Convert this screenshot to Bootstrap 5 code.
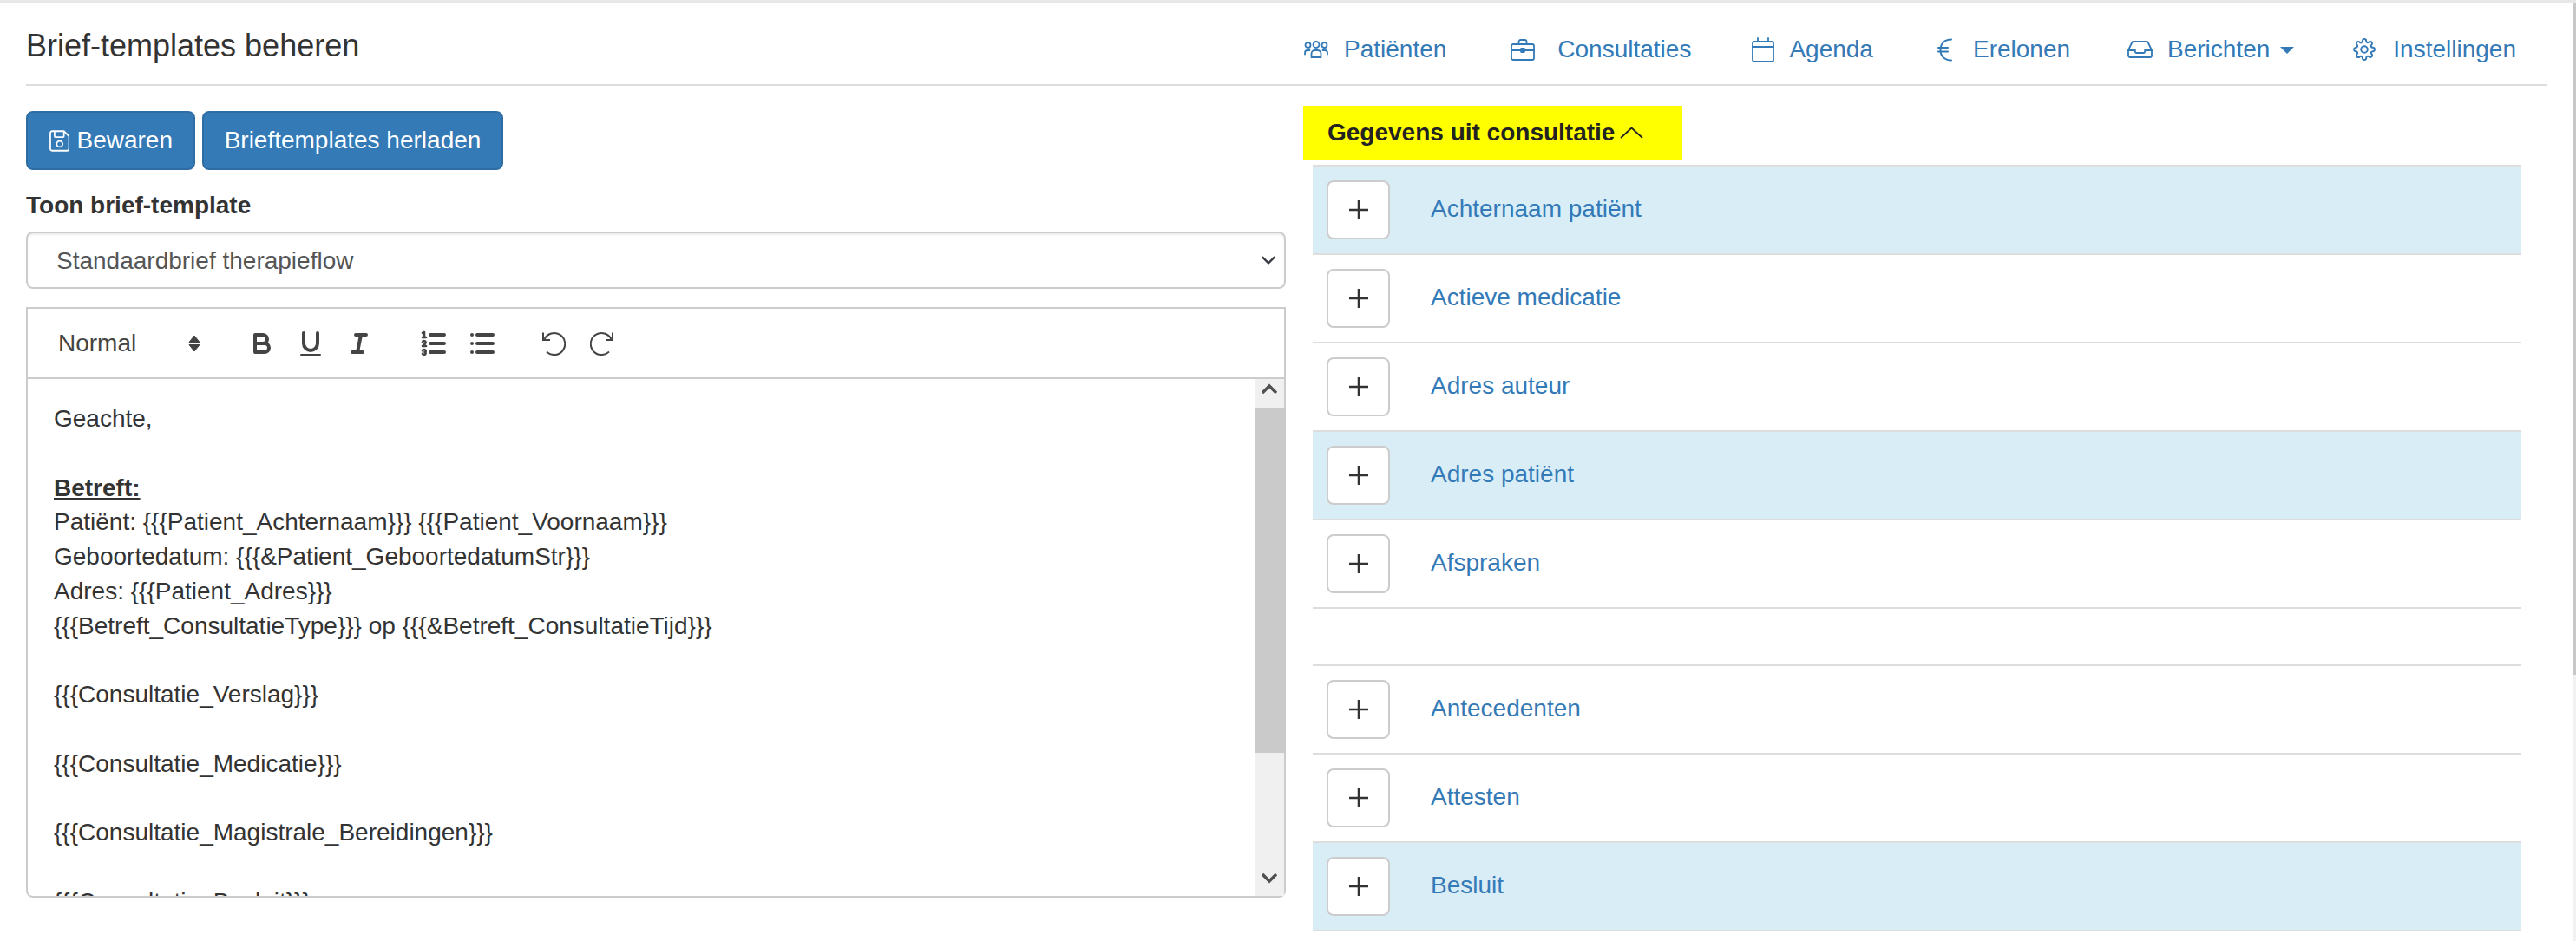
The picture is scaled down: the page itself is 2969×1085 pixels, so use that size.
<!DOCTYPE html>
<html lang="nl">
<head>
<meta charset="utf-8">
<title>Brief-templates beheren</title>
<link href="https://cdn.jsdelivr.net/npm/bootstrap@5.3.0/dist/css/bootstrap.min.css" rel="stylesheet">
<style>
html,body{height:1085px;overflow:hidden;margin:0}
body{font-family:"Liberation Sans",Arial,sans-serif;font-size:28px;line-height:40px;color:#333;background:#fff}
.pagewrap{height:1085px;border-top:3px solid #e7e7e7}
.pagemain{width:2966px;padding-left:30px}
.pagebar{width:3px;background:#f1f1f1;height:1085px}
.pagebar-thumb{height:775px;background:#c8c8c8}
.topbar{width:2905px;height:96px;border-bottom:2px solid #ddd}
.page-title{font-size:36px;font-weight:400;margin:0;line-height:40px;color:#333;padding-top:30px}
.menu-item{color:#337ab7;text-decoration:none;font-size:28px;line-height:40px;padding:0;display:flex;align-items:center}
.menu-list{padding-top:34px;padding-right:35px}
.ms-nav1{margin-left:74px}
.ms-nav2{margin-left:70px}
.ms-nav3{margin-left:74px}
.ms-nav4{margin-left:66px}
.ms-nav5{margin-left:68px}
.ic{fill:none;stroke:#337ab7;stroke-width:1.8;stroke-linecap:round;stroke-linejoin:round;flex:none}
.menu-caret{width:0;height:0;border-left:8px solid transparent;border-right:8px solid transparent;border-top:8px solid #337ab7;margin-left:12px;margin-top:2px}
.leftcol{width:1452px;padding-top:29px}
.rightcol{width:1404px;margin-left:20px;padding-top:23px}
.act-btn{background:#337ab7;border:2px solid #2e6da4;color:#fff;font-size:28px;line-height:40px;padding:12px 24px;border-radius:8px;height:68px;display:inline-flex;align-items:center;white-space:nowrap}
.act-btn:hover{background:#337ab7;border-color:#2e6da4;color:#fff}
.act-save{width:195px;padding-left:25px}
.act-reload{width:347px;margin-left:8px;padding:0;justify-content:center}
.fld-label{font-weight:700;font-size:28px;line-height:40px;margin:21px 0 10px;display:block}
.tpl-select{height:66px;border:2px solid #ccc;border-radius:8px;color:#555;font-size:28px;line-height:40px;padding:2px 60px 0 33px;background-size:24px 18px;background-position:right 6px center;box-shadow:inset 0 2px 2px rgba(0,0,0,.075)}
.ed-tools{height:83px;margin-top:21px;border:2px solid #ccc;padding-left:35px;color:#444}
.ed-picker{width:177px;margin-right:30px;font-size:28px;color:#444}
.ed-step{margin-right:13px}
.ed-btn{width:56px;height:36px;flex:none;display:flex;align-items:center;justify-content:center}
.ed-btn svg{width:36px;height:36px;display:block}
.ed-btn svg.hist{width:28px;height:28px}
.ed-gap{margin-left:30px}
.ed-gap2{margin-left:26px}
.ql{fill:none;stroke:#444;stroke-width:2;stroke-linecap:round;stroke-linejoin:round}
.ql-t{stroke-width:1.3}
.ql-f{fill:#444;stroke:none}
.ql-h{fill:none;stroke:#444;stroke-width:2}
.ed-body{height:598px;border:2px solid #ccc;border-top:0;border-radius:0 0 8px 8px}
.ed-text{padding:26px 30px 0;line-height:39.76px;color:#333;overflow:hidden;flex:1 1 auto;min-width:0;height:596px}
.ed-text p{margin:0;min-height:39.76px}
.ed-bar{width:34px;flex:none;background:#f0f0f0;height:596px}
.ed-thumb{width:36px;height:397px;background:#cacaca}
.ed-arrow{height:34px;padding-top:5px}
.ed-arrow svg{display:block;margin:0 auto}
.ed-arrow-down{margin-top:auto;height:34px;padding-top:6px}
.yellow-head{background:#ff0;width:437px;height:62px;padding-left:28px;font-weight:700;font-size:28px;color:#222}
.yellow-head svg{margin-left:6px}
.data-list{margin-left:11px;margin-top:6px;width:1393px;border-bottom:2px solid #ddd}
.data-row{height:102px;border-top:2px solid #ddd;padding:0 16px;display:flex;align-items:center}
.data-row.hl{background:#d9edf7}
.data-gap{height:66px;border-top:2px solid #ddd}
.add-btn{width:73px;height:68px;padding:0;background:#fff;border:2px solid #ccc;border-radius:8px;display:flex;align-items:center;justify-content:center;flex:none}
.add-btn:hover{background:#fff;border-color:#ccc}
.data-link{color:#337ab7;text-decoration:none;margin-left:47px;margin-top:-2px}
</style>
</head>
<body>
<div class="d-flex align-items-start pagewrap">
<div class="pagemain flex-grow-0">
  <header class="d-flex justify-content-between align-items-start topbar">
    <h1 class="page-title">Brief-templates beheren</h1>
    <nav class="nav menu-list">
      <a class="menu-item" href="#"><svg class="ic" width="28" height="20" viewBox="0 0 28 20" style="margin-right:18px"><circle cx="14" cy="4.5" r="3.5"/><circle cx="4.5" cy="5" r="3"/><circle cx="23.5" cy="5" r="3"/><path d="M8.5 19v-4a4 4 0 0 1 4-4h3a4 4 0 0 1 4 4v4z"/><path d="M1 15.5v-1.500a3 3 0 0 1 3-3h2.500M27 15.500v-1.500a3 3 0 0 0-3-3h-2.500"/></svg>Patiënten</a>
      <a class="menu-item ms-nav1" href="#"><svg class="ic" width="28" height="25" viewBox="0 0 28 25" style="margin-right:26px"><rect x="1" y="6" width="26" height="18" rx="2"/><path d="M9.500 6V3a2 2 0 0 1 2-2h5a2 2 0 0 1 2 2v3M1 13h26"/><rect x="12" y="11" width="4" height="4" rx=".5"/></svg>Consultaties</a>
      <a class="menu-item ms-nav2" href="#"><svg class="ic" width="26" height="29" viewBox="0 0 26 29" style="margin-right:17px"><rect x="1" y="5" width="24" height="23" rx="2"/><path d="M1 11h24M7 1v4M19 1v4"/></svg>Agenda</a>
      <a class="menu-item ms-nav3" href="#"><svg class="ic" width="17" height="27" viewBox="0 0 17 27" style="margin-right:24px"><path d="M16 1.500C8 1.500 3.500 6.500 3.500 13.500S8 25.500 16 25.500M1 11h11M1 15.500h11" stroke-width="2"/></svg>Erelonen</a>
      <a class="menu-item ms-nav4" href="#"><svg class="ic" width="29" height="20" viewBox="0 0 29 20" style="margin-right:17px"><path d="M1 11L5 2.500a2 2 0 0 1 2-1.500h15a2 2 0 0 1 2 1.500L28 11v6a2 2 0 0 1-2 2H3a2 2 0 0 1-2-2z"/><path d="M1 11h8a2 2 0 0 0 2 3h7a2 2 0 0 0 2-3h8"/></svg>Berichten<span class="menu-caret"></span></a>
      <a class="menu-item ms-nav5" href="#"><svg class="ic" width="26" height="28" viewBox="0 0 24 24" style="margin-right:20px"><circle cx="12" cy="12" r="3.500"/><path d="M19.400 15a1.650 1.650 0 0 0 .33 1.820l.06.06a2 2 0 0 1 0 2.830 2 2 0 0 1-2.830 0l-.06-.06a1.650 1.650 0 0 0-1.820-.33 1.650 1.650 0 0 0-1 1.510V21a2 2 0 0 1-2 2 2 2 0 0 1-2-2v-.09A1.650 1.650 0 0 0 9 19.400a1.650 1.650 0 0 0-1.820.33l-.06.06a2 2 0 0 1-2.830 0 2 2 0 0 1 0-2.830l.06-.06a1.650 1.650 0 0 0 .33-1.820 1.650 1.650 0 0 0-1.510-1H3a2 2 0 0 1-2-2 2 2 0 0 1 2-2h.09A1.650 1.650 0 0 0 4.600 9a1.650 1.650 0 0 0-.33-1.820l-.06-.06a2 2 0 0 1 0-2.830 2 2 0 0 1 2.830 0l.06.06a1.650 1.650 0 0 0 1.820.33H9a1.650 1.650 0 0 0 1-1.510V3a2 2 0 0 1 2-2 2 2 0 0 1 2 2v.09a1.650 1.650 0 0 0 1 1.510 1.650 1.650 0 0 0 1.820-.33l.06-.06a2 2 0 0 1 2.830 0 2 2 0 0 1 0 2.830l-.06.06a1.650 1.650 0 0 0-.33 1.820V9a1.650 1.650 0 0 0 1.510 1H21a2 2 0 0 1 2 2 2 2 0 0 1-2 2h-.09a1.650 1.650 0 0 0-1.510 1z"/></svg>Instellingen</a>
    </nav>
  </header>
  <div class="d-flex">
    <section class="leftcol">
      <div class="d-flex">
        <button class="btn act-btn act-save" type="button"><svg width="24" height="25" viewBox="0 0 24 25" fill="none" stroke="#fff" stroke-width="1.800" stroke-linejoin="round" class="me-2 flex-none"><path d="M3 1h14l6 6v15a2 2 0 0 1-2 2H3a2 2 0 0 1-2-2V3a2 2 0 0 1 2-2z"/><path d="M6 1v6a1 1 0 0 0 1 1h9a1 1 0 0 0 1-1V1"/><circle cx="12" cy="16" r="3.500"/></svg>Bewaren</button>
        <button class="btn act-btn act-reload" type="button">Brieftemplates herladen</button>
      </div>
      <label class="fld-label" for="tplsel">Toon brief-template</label>
      <select class="form-select tpl-select" id="tplsel"><option>Standaardbrief therapieflow</option></select>
      <div class="d-flex align-items-center ed-tools">
        <div class="d-flex align-items-center justify-content-between ed-picker"><span>Normal</span><svg width="14" height="20" viewBox="0 0 14 20" class="ed-step"><path d="M7 1L13 8.500H1zM7 19L1 11.500h12z" fill="#444" stroke="#444" stroke-width="1" stroke-linejoin="round"/></svg></div>
        <span class="ed-btn"><svg viewBox="0 0 18 18"><path class="ql" d="M5,4H9.500A2.500,2.500,0,0,1,12,6.500v0A2.500,2.500,0,0,1,9.500,9H5V4Z"/><path class="ql" d="M5,9h5.500A2.500,2.500,0,0,1,13,11.500v0A2.500,2.500,0,0,1,10.500,14H5V9Z"/></svg></span>
        <span class="ed-btn"><svg viewBox="0 0 18 18"><path class="ql" d="M5,3V9a4.012,4.012,0,0,0,4,4H9a4.012,4.012,0,0,0,4-4V3"/><rect class="ql-f" height="1" rx="0.500" width="12" x="3" y="15"/></svg></span>
        <span class="ed-btn"><svg viewBox="0 0 18 18"><path class="ql" d="M7 4h6M5 14h6M8 14l2-10"/></svg></span>
        <span class="ed-btn ed-gap"><svg viewBox="0 0 18 18"><path class="ql" d="M7 4h8M7 9h8M7 14h8"/><path class="ql ql-t" d="M2.500 5.500h2M3.500 5.500V2.500l-1 .5M4.500 10.500h-2c0-.234,1.850-1.076,1.850-2.234A.959.959,0,0,0,2.500,8.156M2.500,14.846a.959.959,0,0,0,1.850-.109A.7.7,0,0,0,3.750,14a.688.688,0,0,0,.6-.736.959.959,0,0,0-1.850-.109"/></svg></span>
        <span class="ed-btn"><svg viewBox="0 0 18 18"><path class="ql" d="M6 4h9M6 9h9M6 14h9M3 4h0M3 9h0M3 14h0"/></svg></span>
        <span class="ed-btn ed-gap2"><svg class="hist" viewBox="0 0 28 28"><path class="ql-h" d="M3.500 9A12.500 12.500 0 1 1 6 23.500M2 1.500V10H10"/></svg></span>
        <span class="ed-btn"><svg class="hist" viewBox="0 0 28 28"><path class="ql-h" d="M24.500 9A12.500 12.500 0 1 0 22 23.500M26 1.500V10H18"/></svg></span>
      </div>
      <div class="d-flex ed-body">
        <div class="ed-text">
          <p>Geachte,</p>
          <p></p>
          <p><strong><u>Betreft:</u></strong></p>
          <p>Patiënt: {{{Patient_Achternaam}}} {{{Patient_Voornaam}}}</p>
          <p>Geboortedatum: {{{&amp;Patient_GeboortedatumStr}}}</p>
          <p>Adres: {{{Patient_Adres}}}</p>
          <p>{{{Betreft_ConsultatieType}}} op {{{&amp;Betreft_ConsultatieTijd}}}</p>
          <p></p>
          <p>{{{Consultatie_Verslag}}}</p>
          <p></p>
          <p>{{{Consultatie_Medicatie}}}</p>
          <p></p>
          <p>{{{Consultatie_Magistrale_Bereidingen}}}</p>
          <p></p>
          <p>{{{Consultatie_Besluit}}}</p>
        </div>
        <div class="d-flex flex-column ed-bar">
          <div class="ed-arrow"><svg width="18" height="14" viewBox="0 0 18 14"><path d="M1 11L9 3l8 8" fill="none" stroke="#505050" stroke-width="3.500"/></svg></div>
          <div class="ed-thumb"></div>
          <div class="ed-arrow-down"><svg class="d-block mx-auto" width="18" height="14" viewBox="0 0 18 14"><path d="M1 3l8 8 8-8" fill="none" stroke="#505050" stroke-width="3.500"/></svg></div>
        </div>
      </div>
    </section>
    <section class="rightcol">
      <div class="d-flex align-items-center yellow-head">Gegevens uit consultatie<svg width="27" height="14" viewBox="0 0 27 14" fill="none" stroke="#222" stroke-width="1.800"><path d="M1 13L13.500 1.500 26 13"/></svg></div>
      <div class="data-list">
        <div class="data-row hl"><button class="btn add-btn" type="button"><svg width="22" height="22" viewBox="0 0 22 22"><path d="M0 11h22M11 0v22" stroke="#333" stroke-width="2.500"/></svg></button><a class="data-link" href="#">Achternaam patiënt</a></div>
        <div class="data-row"><button class="btn add-btn" type="button"><svg width="22" height="22" viewBox="0 0 22 22"><path d="M0 11h22M11 0v22" stroke="#333" stroke-width="2.500"/></svg></button><a class="data-link" href="#">Actieve medicatie</a></div>
        <div class="data-row"><button class="btn add-btn" type="button"><svg width="22" height="22" viewBox="0 0 22 22"><path d="M0 11h22M11 0v22" stroke="#333" stroke-width="2.500"/></svg></button><a class="data-link" href="#">Adres auteur</a></div>
        <div class="data-row hl"><button class="btn add-btn" type="button"><svg width="22" height="22" viewBox="0 0 22 22"><path d="M0 11h22M11 0v22" stroke="#333" stroke-width="2.500"/></svg></button><a class="data-link" href="#">Adres patiënt</a></div>
        <div class="data-row"><button class="btn add-btn" type="button"><svg width="22" height="22" viewBox="0 0 22 22"><path d="M0 11h22M11 0v22" stroke="#333" stroke-width="2.500"/></svg></button><a class="data-link" href="#">Afspraken</a></div>
        <div class="data-gap"></div>
        <div class="data-row"><button class="btn add-btn" type="button"><svg width="22" height="22" viewBox="0 0 22 22"><path d="M0 11h22M11 0v22" stroke="#333" stroke-width="2.500"/></svg></button><a class="data-link" href="#">Antecedenten</a></div>
        <div class="data-row"><button class="btn add-btn" type="button"><svg width="22" height="22" viewBox="0 0 22 22"><path d="M0 11h22M11 0v22" stroke="#333" stroke-width="2.500"/></svg></button><a class="data-link" href="#">Attesten</a></div>
        <div class="data-row hl"><button class="btn add-btn" type="button"><svg width="22" height="22" viewBox="0 0 22 22"><path d="M0 11h22M11 0v22" stroke="#333" stroke-width="2.500"/></svg></button><a class="data-link" href="#">Besluit</a></div>
      </div>
    </section>
  </div>
</div>
<aside class="pagebar flex-none"><div class="pagebar-thumb"></div></aside>
</div>
<script src="https://cdn.jsdelivr.net/npm/bootstrap@5.3.0/dist/js/bootstrap.bundle.min.js"></script>
</body>
</html>
